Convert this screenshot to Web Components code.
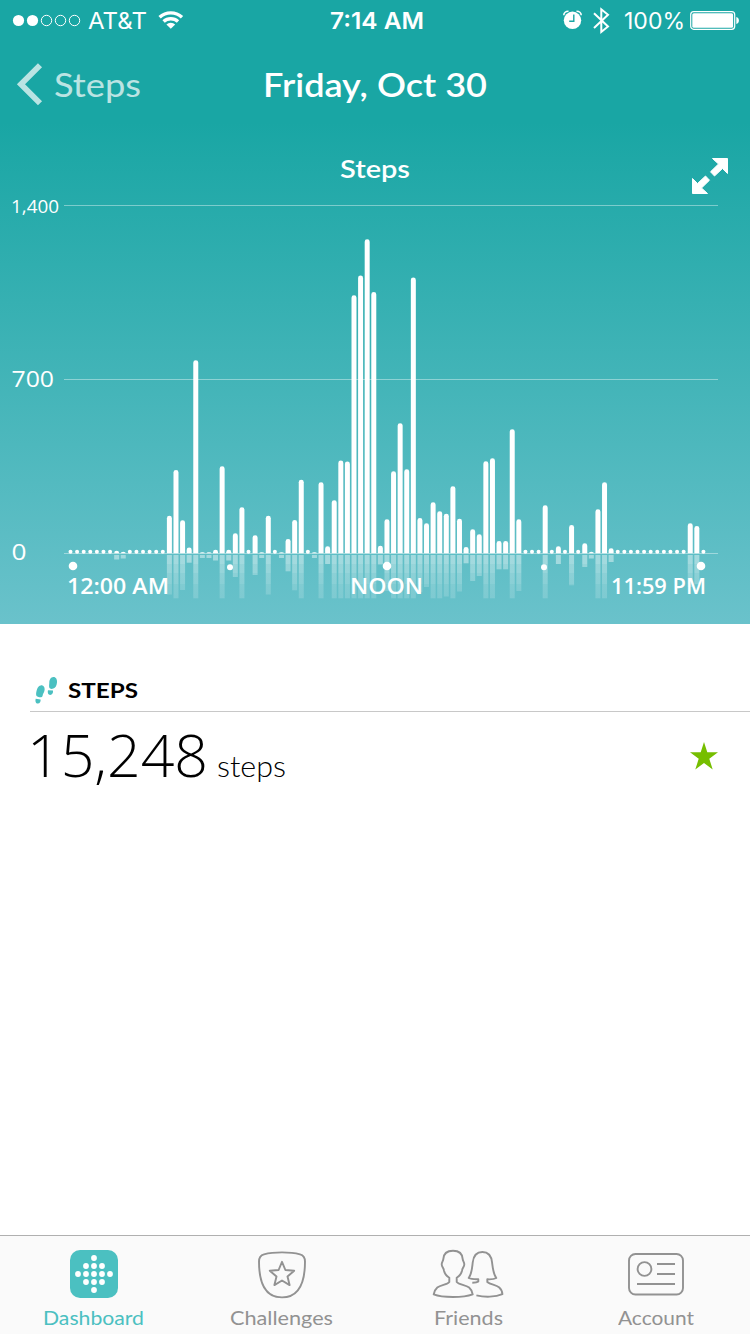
<!DOCTYPE html>
<html lang="en">
<head>
<meta charset="utf-8">
<title>Steps</title>
<style>
    body{
        margin: 0;
        background-color: #fff;
        font-family: Lato, "Open Sans", sans-serif;
    }
</style>
</head>
<body>
<steps-app></steps-app>

<script>
//attach an open shadow root filled with the given markup
const attachTemplate = (element, html) => {
    const shadowRoot = element.attachShadow({mode: 'open'});
    const template = document.createElement('template');

    template.innerHTML = html;
    shadowRoot.appendChild(template.content.cloneNode(true));

    return shadowRoot;
}

//text stretched to a fixed width
class FitLabel extends HTMLElement{
    constructor() {
        super();

        this.root = attachTemplate(this, `
        <style>
            :host{
                display: block;
                flex: none;
                white-space: nowrap;
            }
            span{
                display: inline-block;
                transform-origin: 0 50%;
            }
        </style>
        <span><slot></slot></span>
        `);
    }

    connectedCallback() {
        const width = Number(this.getAttribute('width'));
        const span = this.root.querySelector('span');

        this.style.width = `${width}px`;
        span.style.transform = `scaleX(${width / span.getBoundingClientRect().width})`;
    }
}

class StatusBar extends HTMLElement{
    constructor() {
        super();

        attachTemplate(this, `
        <style>
            :host{
                display: grid;
                grid-template-columns: 1fr auto 1fr;
                grid-template-rows: 40px;
                align-items: start;
                height: 40px;
                padding: 0 10px 0 12px;
                color: #fff;
                font: 400 23px/42px Inter, Roboto, sans-serif;
            }
            div{
                display: flex;
                align-items: flex-start;
            }
            .right{
                justify-content: flex-end;
            }
            .time{
                font-weight: 600;
                padding-left: 2px;
            }
            svg{
                display: block;
                flex: none;
            }
        </style>
        <div>
            <svg width="70" height="40">
                <g fill="#fff"><circle cx="6.5" cy="20.5" r="5.6"/><circle cx="20.5" cy="20.5" r="5.6"/></g>
                <g fill="none" stroke="#fff"><circle cx="34.5" cy="20.5" r="5.2"/><circle cx="48.5" cy="20.5" r="5.2"/><circle cx="62.5" cy="20.5" r="5.2"/></g>
            </svg>
            <fit-label width="59" style="margin-left:6px">AT&amp;T</fit-label>
            <svg width="26" height="40" style="margin-left:11px" fill="none" stroke="#fff" stroke-width="3.4">
                <path d="M1.6 17.3a16.4 16.4 0 0 1 22.4 0"/>
                <path d="M5.6 21.6a10.6 10.6 0 0 1 14.4 0"/>
                <path d="M8.4 24.4a6.4 6.4 0 0 1 8.8 0L12.8 28.8z" fill="#fff" stroke="none"/>
            </svg>
        </div>
        <fit-label class="time" width="94">7:14 AM</fit-label>
        <div class="right">
            <svg width="20" height="40">
                <circle cx="9.5" cy="20.3" r="8.7" fill="#fff"/>
                <path d="M.8 15.3C.8 12.6 2.8 11.2 5.5 11.3M18.2 15.3C18.2 12.6 16.2 11.2 13.5 11.3" fill="none" stroke="#fff" stroke-width="1.6"/>
                <path d="M10.8 14.5v6.7H6.2" fill="none" stroke="#19a6a4" stroke-width="1.4"/>
            </svg>
            <svg width="17" height="40" style="margin-left:10px" fill="none" stroke="#fff" stroke-width="2">
                <path d="M1 13.3 15 26.5 8.3 32V9.3L15 14.8 1 28"/>
            </svg>
            <fit-label width="61" style="margin-left:14px">100%</fit-label>
            <svg width="50" height="40" style="margin-left:5px">
                <rect x=".7" y="11.7" width="44" height="17.6" rx="3" fill="none" stroke="#fff" stroke-width="1.2"/>
                <rect x="2.3" y="13.3" width="40.8" height="14.4" rx="1.5" fill="#fff"/>
                <path d="M46.3 17c1.7.4 2.6 1.7 2.6 3.5s-.9 3.1-2.6 3.5z" fill="#fff"/>
            </svg>
        </div>
        `);
    }
}

class NavBar extends HTMLElement{
    constructor() {
        super();

        attachTemplate(this, `
        <style>
            :host{
                display: grid;
                grid-template-columns: 1fr auto 1fr;
                align-items: center;
                height: 87px;
                padding: 0 16px;
                color: #fff;
                font-size: 33px;
                line-height: 88px;
            }
            .back{
                display: flex;
                align-items: center;
                gap: 11px;
                opacity: .7;
            }
            .title{
                font-weight: 600;
            }
        </style>
        <div class="back">
            <svg width="27" height="44" viewBox="0 0 27 44" fill="none" stroke="#fff" stroke-width="5.8">
                <path d="M24 3.2 5 22.2l19 19"/>
            </svg>
            <fit-label width="87">Steps</fit-label>
        </div>
        <fit-label class="title" width="224"><slot></slot></fit-label>
        `);
    }
}

//column heights over 24 hours, 0 is an empty slot
const COLUMNS = [
    0, 0, 0, 0, 0, 0, 0, 2.5, 1.5, 0, 0, 0, 0, 0, 0, 37.5,
    83.3, 33, 5.7, 193, 1, 1, 3.5, 87, 3.5, 20, 46, 0, 18, 1, 37.5, 0,
    1, 14.3, 33.3, 73.5, 0, 1, 71, 7, 53, 92.7, 91.7, 258, 277.7, 314, 261.3, 7.5,
    34, 82, 130, 84, 275.7, 35.3, 30, 51, 42, 39.5, 67, 34.5, 6.3, 24, 19, 92,
    95, 12.3, 12.3, 124, 34, 0, 0, 0, 48, 0, 7, 0, 28.3, 0, 10, 1.5,
    44, 71, 5, 0, 0, 0, 0, 0, 0, 0, 0, 0, 0, 0, 30, 27.3, 0
];

class StepsChart extends HTMLElement{
    constructor() {
        super();

        const zero = 426.3;
        let bars = '';
        let reflections = '';

        COLUMNS.forEach((height, index) => {
            const x = 70.5 + index * 6.593;

            if (height == 0) {
                bars += `<circle cx="${x}" cy="424.8" r="2"/>`;
                return;
            }

            const radius = Math.min(2.4, height);
            bars += `<path d="M${x - 2.5} ${zero}V${zero - height + radius}a2.5 ${radius} 0 0 1 5 0V${zero}z"/>`;
            reflections += `<rect x="${x - 2.5}" y="428" width="5" height="${Math.min(43.3, height + 2)}"/>`;
        });

        attachTemplate(this, `
        <style>
            :host{
                display: block;
                height: 497px;
            }
            svg{
                display: block;
            }
            text{
                fill: #fff;
                font-family: "Open Sans", sans-serif;
                font-size: 21.5px;
            }
            .strong{
                font-weight: 600;
            }
            .title{
                font-family: Lato, sans-serif;
                font-size: 25px;
            }
        </style>
        <svg width="750" height="497" viewBox="0 0 750 497">
            <defs>
                <linearGradient id="fade" gradientUnits="userSpaceOnUse" x1="0" y1="428" x2="0" y2="471">
                    <stop offset="0" stop-color="#fff" stop-opacity=".42"/>
                    <stop offset=".22" stop-color="#fff" stop-opacity=".42"/>
                    <stop offset=".22" stop-color="#fff" stop-opacity=".34"/>
                    <stop offset=".42" stop-color="#fff" stop-opacity=".34"/>
                    <stop offset=".42" stop-color="#fff" stop-opacity=".27"/>
                    <stop offset=".68" stop-color="#fff" stop-opacity=".25"/>
                    <stop offset=".68" stop-color="#fff" stop-opacity=".19"/>
                    <stop offset="1" stop-color="#fff" stop-opacity=".16"/>
                </linearGradient>
            </defs>

            <text class="strong title" x="340" y="51" textLength="70" lengthAdjust="spacingAndGlyphs">Steps</text>
            <g fill="#fff" stroke="#fff" stroke-linejoin="round">
                <path d="M712.5 31.5h15v15l-5-5-8 7.5-4-4.2 8-7.8z"/>
                <path d="M707.5 66.5h-15v-15l5 5 8-7.5 4 4.2-8 7.8z"/>
            </g>

            <path d="M64 78.5h654M64 252.5h654M64 426.5h654" stroke="#fff" stroke-opacity=".4"/>
            <text x="11" y="86" style="font-size:19px" textLength="48" lengthAdjust="spacingAndGlyphs">1,400</text>
            <text x="11.5" y="260" textLength="42.5" lengthAdjust="spacingAndGlyphs">700</text>
            <text x="11.5" y="433" textLength="15" lengthAdjust="spacingAndGlyphs">0</text>

            <g fill="url(#fade)">${reflections}</g>
            <g fill="#fff">${bars}</g>

            <g fill="#fff">
                <circle cx="73" cy="439" r="4.3"/>
                <circle cx="230" cy="440.3" r="3"/>
                <circle cx="387" cy="439" r="4.3"/>
                <circle cx="544" cy="440.3" r="3"/>
                <circle cx="701" cy="439" r="4.3"/>
            </g>
            <text class="strong" x="67" y="467" textLength="102" lengthAdjust="spacingAndGlyphs">12:00 AM</text>
            <text class="strong" x="350" y="467" textLength="73" lengthAdjust="spacingAndGlyphs">NOON</text>
            <text class="strong" x="611" y="467" textLength="95" lengthAdjust="spacingAndGlyphs">11:59 PM</text>
        </svg>
        `);
    }
}

class StepsSummary extends HTMLElement{
    constructor() {
        super();

        attachTemplate(this, `
        <style>
            :host{
                display: block;
                padding: 45px 0 0 30px;
                color: #000;
            }
            header{
                display: flex;
                align-items: center;
                gap: 10px;
                height: 42px;
                border-bottom: 1px solid #c8c8c8;
                font-size: 21.5px;
                font-weight: 700;
            }
            .total{
                display: flex;
                align-items: center;
                justify-content: space-between;
                height: 82px;
                padding-right: 32px;
            }
            .value{
                display: flex;
                align-items: baseline;
                gap: 9px;
                margin-top: 13px;
                margin-left: -3px;
                font: 300 59px/82px "Open Sans", sans-serif;
            }
            .unit{
                font-family: Lato, sans-serif;
                font-size: 29px;
            }
            .star{
                margin-top: 6px;
            }
        </style>
        <header>
            <svg width="28" height="30" viewBox="30 675 28 30" fill="#4bc0c1">
                <path d="M40.8 685.4c2.6-.3 4.2 2 3.8 4.7-.4 2.6-1.7 3.6-2 5.6-.3 1.4-1.5 1.8-3.3 1.5-2-.3-3.3-1-3.2-2.9.1-3.4 1.4-8.5 4.7-8.900z"/>
                <path d="M35.7 698.7l4.9.9c.2 1.9-.7 4-2.7 4-2.3 0-2.9-2.5-2.2-4.9z"/>
                <path d="M53.4 676.9c2.5-.1 3.9 2.3 3.6 5.500-.3 3.400-1.700 5.800-4.300 6.400-1.700.3-3.200-.1-3.500-1.500-.3-1.800.1-3 .1-4.700 0-2.900 1.500-5.600 4.100-5.700z"/>
                <path d="M48 690.300l5 .3c.3 2.300-.7 4.400-2.800 4.400-2.200 0-2.900-2.200-2.200-4.700z"/>
            </svg>
            <fit-label width="70">STEPS</fit-label>
        </header>
        <div class="total">
            <div class="value">
                <fit-label width="181">15,248</fit-label>
                <fit-label class="unit" width="69">steps</fit-label>
            </div>
            <svg class="star" width="28" height="28" viewBox="0 0 28 28">
                <path d="M14 0l3.3 10.3H28l-8.7 6.5 3.400 10.700L14 21l-8.700 6.500 3.400-10.700L0 10.300h10.700z" fill="#76be00"/>
            </svg>
        </div>
        `);
    }
}

class TabItem extends HTMLElement{
    constructor() {
        super();

        attachTemplate(this, `
        <style>
            :host{
                display: flex;
                flex-direction: column;
                align-items: center;
                gap: 7px;
                padding-top: 13px;
                color: #929292;
                font-size: 19.5px;
                line-height: 24px;
            }
            :host([active]){
                color: #4bc0c1;
            }
        </style>
        <slot name="icon"></slot>
        <slot></slot>
        `);
    }
}

class TabBar extends HTMLElement{
    constructor() {
        super();

        //diamond of dots on the dashboard icon
        let dots = '';
        for (let column = -2; column <= 2; column++) {
            const reach = [2, 1, 0][Math.abs(column)];
            for (let row = -reach; row <= reach; row++) {
                dots += `<circle cx="${24 + column * 8}" cy="${25 + row * 8}" r="2.9"/>`;
            }
        }

        attachTemplate(this, `
        <style>
            :host{
                display: grid;
                grid-template-columns: 187px 188px 186px 189px;
                height: 98px;
                border-top: 1px solid #b0b0b0;
                background-color: #fafafa;
            }
            svg{
                display: block;
                fill: none;
                stroke: #929292;
                stroke-width: 1.9;
            }
            .dots{
                fill: #fff;
                stroke: none;
            }
        </style>
        <tab-item active>
            <svg slot="icon" width="47" height="50" viewBox="0 0 47 50" overflow="visible">
                <rect y="1" width="48" height="48" rx="10" fill="#4bc0c1" stroke="none"/>
                <g class="dots">${dots}</g>
            </svg>
            <fit-label width="101">Dashboard</fit-label>
        </tab-item>
        <tab-item>
            <svg slot="icon" width="48" height="50" overflow="visible">
                <path d="M25 3.400c8 0 13 .6 18 1.900 3.400.9 5 3.300 5 7.200C48 34 42 48.400 25 48.400S2 34 2 12.500c0-3.900 1.600-6.300 5-7.200C12 4 17 3.400 25 3.400z"/>
                <path d="M25 12.800l3.400 8.200 8.800.7-6.700 5.800 2.100 8.600-7.600-4.600-7.600 4.600 2.100-8.600-6.700-5.800 8.800-.7z" stroke-linejoin="round"/>
            </svg>
            <fit-label width="103">Challenges</fit-label>
        </tab-item>
        <tab-item>
            <svg slot="icon" width="72" height="50" stroke-linejoin="round">
                <path d="M21 1.700c-6 0-9.400 2.800-9.700 8.400-.1 1.900-1.600 2.800-1.600 5.200 0 2.700 1.700 3 2.300 6.400.7 3.200 2.200 5 5.300 7v4.300c-1.700 2.700-8.500 2.800-12 5.500C3 40.500 2 43.500 1.700 45.400 7 47.500 14 48 21 48s14-.5 19.700-2.600c-.3-1.900-1.300-4.900-3.600-6.900-3.500-2.700-10.300-2.800-12.400-5.500v-4.300c3.100-2 4.600-3.800 5.300-7 .6-3.400 2.300-3.700 2.300-6.400 0-2.400-1.500-3.300-1.600-5.200C30.400 4.500 27 1.700 21 1.700z"/>
                <path d="M40.300 33.700c3 0 5-.3 6-1.100v-2.400c-4 .1-7.300 0-9.600-1.200 3-3.800 3.300-9.300 4-15.300C41.400 6.700 44 3 50.400 3s9 3.700 9.700 10.700c.7 6 1.200 11.500 4.200 15.300-2 1.200-5 1.500-9 1.300v2.700c3 2.500 8.500 2.700 11.700 5.200 2.200 1.800 3.200 4.400 3.400 6.900-7 3.200-18 3.200-26 1.300"/>
            </svg>
            <fit-label width="69">Friends</fit-label>
        </tab-item>
        <tab-item>
            <svg slot="icon" width="55" height="50" viewBox="0 0 55 50" overflow="visible">
                <rect x="1" y="5" width="54" height="40.5" rx="6.5"/>
                <circle cx="16.5" cy="20" r="6.9"/>
                <path d="M29 15h18M29 25h18M9 35h38"/>
            </svg>
            <fit-label width="76">Account</fit-label>
        </tab-item>
        `);
    }
}

class StepsApp extends HTMLElement{
    constructor() {
        super();

        attachTemplate(this, `
        <style>
            :host{
                display: flex;
                flex-direction: column;
                width: 750px;
                height: 1334px;
            }
            .hero{
                background: linear-gradient(#19a6a4 0, #19a6a4 122px, #6ac2cb 624px);
            }
            steps-summary{
                flex: 1;
            }
        </style>
        <div class="hero">
            <status-bar></status-bar>
            <nav-bar>Friday, Oct 30</nav-bar>
            <steps-chart></steps-chart>
        </div>
        <steps-summary></steps-summary>
        <tab-bar></tab-bar>
        `);
    }
}

customElements.define("fit-label", FitLabel);
customElements.define("status-bar", StatusBar);
customElements.define("nav-bar", NavBar);
customElements.define("steps-chart", StepsChart);
customElements.define("steps-summary", StepsSummary);
customElements.define("tab-item", TabItem);
customElements.define("tab-bar", TabBar);
customElements.define("steps-app", StepsApp);
</script>
</body>
</html>
